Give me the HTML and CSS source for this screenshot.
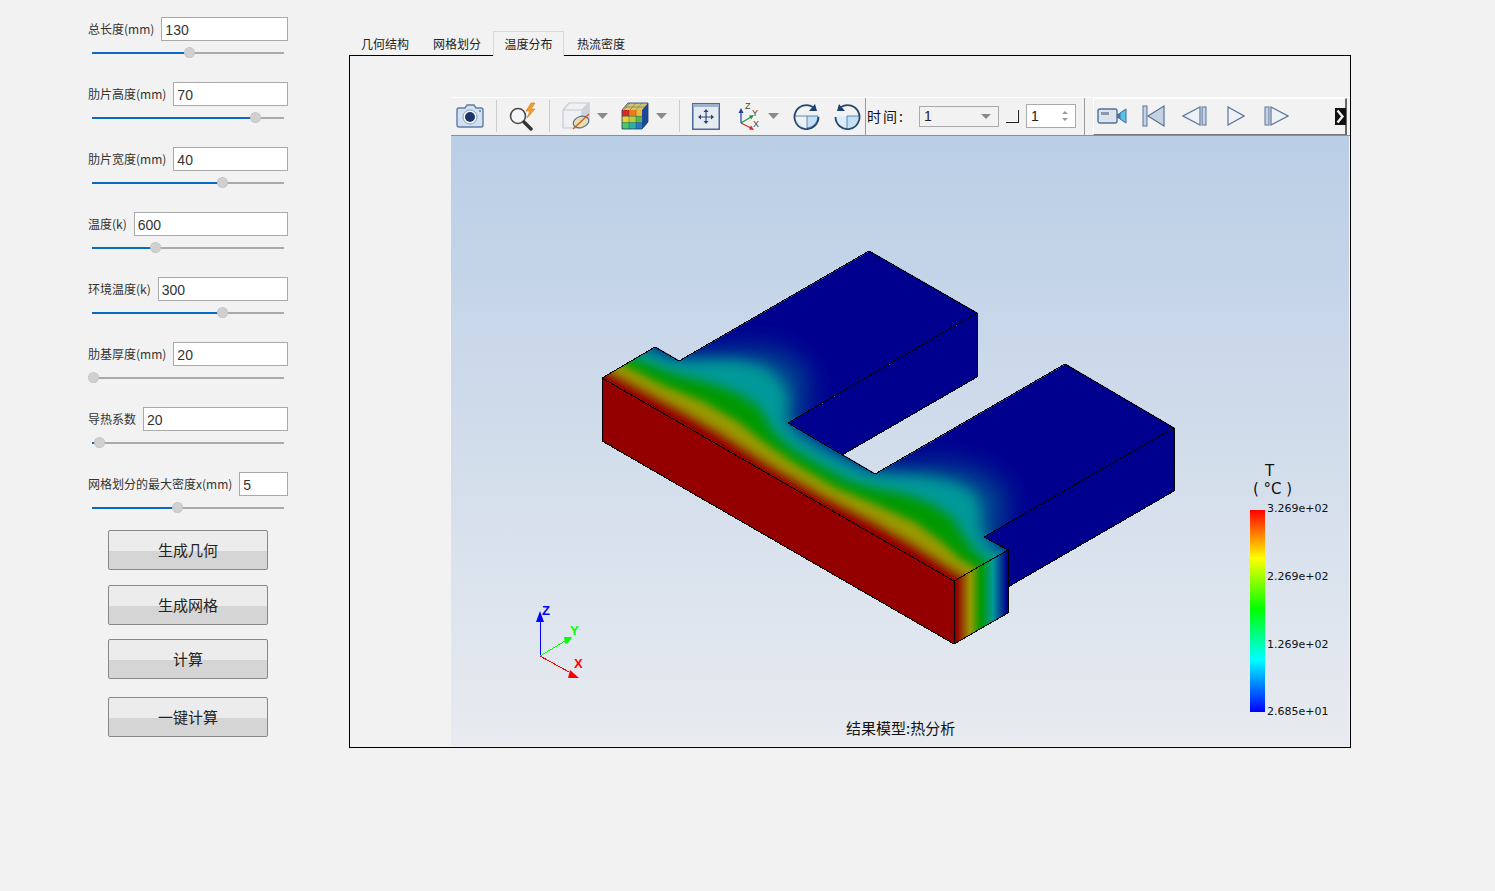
FILE: index.html
```html
<!DOCTYPE html>
<html lang="zh">
<head>
<meta charset="utf-8">
<title>热分析</title>
<link rel="stylesheet" href="styles.css">
</head>
<body>
<div class="app">
  <aside class="params">
    <div class="param"><div class="param-row"><label class="param-label">总长度(mm)</label><input class="field" value="130"></div><div class="slider"><div class="slider-fill" style="width:97px"></div><div class="slider-thumb" style="left:97px"></div></div></div>
    <div class="param"><div class="param-row"><label class="param-label">肋片高度(mm)</label><input class="field" value="70"></div><div class="slider"><div class="slider-fill" style="width:163px"></div><div class="slider-thumb" style="left:163px"></div></div></div>
    <div class="param"><div class="param-row"><label class="param-label">肋片宽度(mm)</label><input class="field" value="40"></div><div class="slider"><div class="slider-fill" style="width:130px"></div><div class="slider-thumb" style="left:130px"></div></div></div>
    <div class="param"><div class="param-row"><label class="param-label">温度(k)</label><input class="field" value="600"></div><div class="slider"><div class="slider-fill" style="width:63px"></div><div class="slider-thumb" style="left:63px"></div></div></div>
    <div class="param"><div class="param-row"><label class="param-label">环境温度(k)</label><input class="field" value="300"></div><div class="slider"><div class="slider-fill" style="width:130px"></div><div class="slider-thumb" style="left:130px"></div></div></div>
    <div class="param"><div class="param-row"><label class="param-label">肋基厚度(mm)</label><input class="field" value="20"></div><div class="slider"><div class="slider-fill" style="width:1px"></div><div class="slider-thumb" style="left:1px"></div></div></div>
    <div class="param"><div class="param-row"><label class="param-label">导热系数</label><input class="field" value="20"></div><div class="slider"><div class="slider-fill" style="width:7px"></div><div class="slider-thumb" style="left:7px"></div></div></div>
    <div class="param"><div class="param-row"><label class="param-label">网格划分的最大密度x(mm)</label><input class="field" value="5"></div><div class="slider"><div class="slider-fill" style="width:85px"></div><div class="slider-thumb" style="left:85px"></div></div></div>
    <div class="actions">
      <button class="action">生成几何</button>
      <button class="action action-b">生成网格</button>
      <button class="action action-c">计算</button>
      <button class="action action-d">一键计算</button>
    </div>
  </aside>

  <main class="workspace">
    <nav class="tabs">
      <span class="tab">几何结构</span>
      <span class="tab">网格划分</span>
      <span class="tab tab-active">温度分布</span>
      <span class="tab">热流密度</span>
    </nav>
    <section class="panel">
      <div class="viewer">
        <div class="toolbar">
          <svg class="i ml5" width="28" height="24" viewBox="0 0 28 24"><path d="M3 4h6l2-3h7l2 3h5a2 2 0 0 1 2 2v15a2 2 0 0 1-2 2H3a2 2 0 0 1-2-2V6a2 2 0 0 1 2-2z" fill="#d3e0ef" stroke="#5d7ca6" stroke-width="1.4"/><circle cx="14" cy="13" r="7" fill="#fff" stroke="#7f9cc0"/><circle cx="14" cy="13" r="5" fill="#1c3468"/><circle cx="24" cy="7" r="1" fill="#5d7ca6"/></svg>
          <span class="sep ml12"></span>
          <svg class="i ml11" width="31" height="29" viewBox="0 0 31 29"><path d="M23 1l-5 8h4l-3 7 8-9h-4l4-6z" fill="#f0a030" stroke="#d07810" stroke-width=".6"/><circle cx="10" cy="14" r="7.5" fill="#f4f7fa" stroke="#4a4a4a" stroke-width="1.6"/><path d="M16 20l7 7" stroke="#333" stroke-width="3.4" stroke-linecap="round"/></svg>
          <span class="sep ml10"></span>
          <svg class="i ml12" width="29" height="28" viewBox="0 0 29 28"><path d="M1 8l6-7h20v17l-7 8H1z" fill="#eef0f3" stroke="#c3c9d3" stroke-width="1.2"/><path d="M1 8h19v18M20 8l7-7" fill="none" stroke="#c3c9d3" stroke-width="1.2"/><path d="M20 8l7-7v17l-7 8z" fill="#cfd4dc"/><ellipse cx="19" cy="20" rx="8" ry="5.5" transform="rotate(-18 19 20)" fill="#eadfa8" stroke="#5b6f92" stroke-width="1.2"/><path d="M11 27l16-15" stroke="#d0562a" stroke-width="1.2"/></svg>
          <svg class="i ml6" width="11" height="6" viewBox="0 0 11 6"><path d="M0 0h11L5.500 6z" fill="#8a8a8a"/></svg>
          <svg class="i ml13" width="28" height="28" viewBox="0 0 28 28"><path d="M1 8l6-7h20l-6 7z" fill="#d8c66a"/><path d="M21 8l6-7v19l-6 7z" fill="#1c4aa0"/><rect x="1" y="8" width="20" height="19" fill="#48b050"/><rect x="1" y="8" width="7" height="6.300" fill="#d82a20"/><rect x="8" y="8" width="7" height="6.300" fill="#ee7a20"/><rect x="15" y="8" width="6" height="6.300" fill="#f0b830"/><rect x="1" y="14.300" width="7" height="6.300" fill="#e8d030"/><rect x="8" y="14.300" width="7" height="6.300" fill="#b8d038"/><rect x="15" y="14.300" width="6" height="6.300" fill="#58b848"/><rect x="1" y="20.600" width="7" height="6.400" fill="#48c868"/><rect x="8" y="20.600" width="7" height="6.400" fill="#30b0a0"/><rect x="15" y="20.600" width="6" height="6.400" fill="#2878c0"/><path d="M8 8v19M15 8v19M1 14.300h20M1 20.600h20M3 8l6-7M9 8l6-7M15 8l6-7M4 5h20M23 6v19M25 4v19" stroke="#1d3a6c" stroke-width=".6" fill="none" opacity=".6"/><path d="M1 8l6-7h20v19l-6 7H1z" fill="none" stroke="#1d3a6c" stroke-width=".8"/></svg>
          <svg class="i ml7" width="11" height="6" viewBox="0 0 11 6"><path d="M0 0h11L5.500 6z" fill="#8a8a8a"/></svg>
          <span class="sep ml12"></span>
          <svg class="i ml12" width="28" height="27" viewBox="0 0 28 27"><rect x=".75" y=".75" width="26.500" height="25.500" fill="#e6ebf2" stroke="#4d6a96" stroke-width="1.500"/><rect x="1" y="1" width="26" height="3" fill="#9fb3cf"/><path d="M14 7v13M8 14h12" stroke="#2a4675" stroke-width="1.200"/><path d="M14 6l-2.500 3h5zM14 21l-2.500-3h5zM6 14l3-2.500v5zM22 14l-3-2.500v5z" fill="#2a4675"/></svg>
          <svg class="i ml17" width="24" height="29" viewBox="0 0 24 29"><path d="M4 21V9" stroke="#1d3fa8" stroke-width="1.200"/><path d="M4 6l-2.500 5h5z" fill="#1d3fa8"/><path d="M4 21l10-6" stroke="#1f9a40" stroke-width="1.200"/><path d="M17 13l-5 .5 2.200 4z" fill="#1f9a40"/><path d="M4 21l10 5" stroke="#d02a2a" stroke-width="1.200"/><path d="M17 28l-5-.5 2-4z" fill="#d02a2a"/><text class="i-axis" x="8" y="7">Z</text><text class="i-axis" x="15" y="14">Y</text><text class="i-axis" x="16" y="25">X</text></svg>
          <svg class="i ml7" width="11" height="6" viewBox="0 0 11 6"><path d="M0 0h11L5.500 6z" fill="#8a8a8a"/></svg>
          <svg class="i ml14" width="27" height="27" viewBox="0 0 27 27"><path d="M14 13h11a12 12 0 0 1-11 12z" fill="#c4e0f5"/><path d="M2 14a12 12 0 0 0 12 12h0z" fill="#dcecf8"/><path d="M14 13h11a12 12 0 0 1-11 12zM2 13h12" fill="none" stroke="#3d6ea8" stroke-width=".8"/><path d="M20 4A12 12 0 1 0 25.500 14" fill="none" stroke="#27476f" stroke-width="1.800"/><path d="M24 8l-8 0 6-7z" fill="#1f3f6e"/></svg>
          <svg class="i ml14" width="27" height="27" viewBox="0 0 27 27"><path d="M13 13H2a12 12 0 0 0 11 12z" fill="#dcecf8"/><path d="M13 13h12a12 12 0 0 1-12 12z" fill="#c4e0f5"/><path d="M13 13v12M13 13h12" fill="none" stroke="#3d6ea8" stroke-width=".8"/><path d="M7 4a12 12 0 1 1-5.500 10" fill="none" stroke="#27476f" stroke-width="1.800"/><path d="M3 8l8 0-6-7z" fill="#1f3f6e"/></svg>
          <span class="sep-full ml4"></span>
          <span class="time-label">时间:</span>
          <div class="combo"><span>1</span><svg width="10" height="5" viewBox="0 0 10 5"><path d="M0 0h10L5 5z" fill="#8a8a8a"/></svg></div>
          <span class="corner"></span>
          <div class="spin"><span>1</span><svg width="8" height="12" viewBox="0 0 8 12"><path d="M4 1l3 3H1zM4 11L1 8h6z" fill="#9a9a9a"/></svg></div>
          <span class="sep-full ml8"></span>
          <div class="player">
            <svg class="i" width="30" height="18" viewBox="0 0 30 18"><rect x="1" y="2" width="19" height="14" rx="2" fill="#dde3ec" stroke="#50709c" stroke-width="1.400"/><rect x="4" y="5" width="8" height="3" fill="#8d9aab"/><path d="M20 7l3-1v6l-3-1z" fill="#50709c"/><path d="M23 6l6-4v14l-6-4z" fill="#5cc0e8" stroke="#3a6ea0"/></svg>
            <svg class="i ml15" width="23" height="22" viewBox="0 0 23 22"><rect x="1" y="1" width="4" height="20" fill="#c4d2e4" stroke="#5b7498"/><path d="M22 1v20L6 11z" fill="#c4d2e4" stroke="#5b7498" stroke-width="1.200"/></svg>
            <svg class="i ml17" width="25" height="20" viewBox="0 0 25 20"><path d="M18 1v18L1 10z" fill="#eef2f7" stroke="#5b7498" stroke-width="1.200"/><rect x="20" y="1" width="4" height="18" fill="#c4d2e4" stroke="#5b7498"/></svg>
            <svg class="i ml20" width="18" height="20" viewBox="0 0 18 20"><path d="M1 1v18l16-9z" fill="#eef2f7" stroke="#5b7498" stroke-width="1.200"/></svg>
            <svg class="i ml19" width="25" height="20" viewBox="0 0 25 20"><rect x="1" y="1" width="4" height="18" fill="#c4d2e4" stroke="#5b7498"/><path d="M7 1v18l17-9z" fill="#eef2f7" stroke="#5b7498" stroke-width="1.200"/></svg>
            <svg class="i more" width="11" height="19" viewBox="0 0 11 19"><path d="M0 1h11v17H0z" fill="#111"/><path d="M2.500 3.500L7.500 9.500l-5 6" fill="none" stroke="#f2f2f2" stroke-width="2.400"/></svg>
          </div>
        </div>
        <svg class="scene" viewBox="451 136 898 610" preserveAspectRatio="none">
          <defs>
            <linearGradient id="sky" x1="0" y1="0" x2="0" y2="1"><stop offset="0" stop-color="#bacee6"/><stop offset="1" stop-color="#e8ebf0"/></linearGradient>
            <linearGradient id="endFace" gradientUnits="userSpaceOnUse" x1="954" y1="0" x2="1008" y2="0"><stop offset=".05" stop-color="#940000"/><stop offset=".3" stop-color="#999900"/><stop offset=".5" stop-color="#009900"/><stop offset=".72" stop-color="#009999"/><stop offset=".98" stop-color="#00008f"/></linearGradient>
            <linearGradient id="ramp" x1="0" y1="0" x2="0" y2="1"><stop offset="0" stop-color="#f00"/><stop offset=".24" stop-color="#ff0"/><stop offset=".49" stop-color="#0f0"/><stop offset=".74" stop-color="#0ff"/><stop offset="1" stop-color="#00f"/></linearGradient>
            <clipPath id="topClip"><polygon points="603,378 656,347 680,361 870,251 978,313 789,423 876,474 1066,364 1175,428 985,537 1008,550 954,581"/></clipPath>
            <filter id="softOuter" filterUnits="userSpaceOnUse" x="451" y="136" width="898" height="610"><feGaussianBlur stdDeviation="14"/></filter>
            <filter id="softWide" filterUnits="userSpaceOnUse" x="451" y="136" width="898" height="610"><feGaussianBlur stdDeviation="7"/></filter>
            <filter id="softMid" filterUnits="userSpaceOnUse" x="451" y="136" width="898" height="610"><feGaussianBlur stdDeviation="6"/></filter>
            <filter id="soft" filterUnits="userSpaceOnUse" x="451" y="136" width="898" height="610"><feGaussianBlur stdDeviation="4"/></filter>
          </defs>
          <rect x="451" y="136" width="898" height="610" fill="url(#sky)"/>

          <g class="faces">
            <polygon points="978,313 978,377 843,455 789,423" fill="#00008f"/>
            <polygon points="1175,428 1175,491 1008,587 1008,550 985,537" fill="#00008f"/>
            <polygon points="603,378 954,581 954,644 603,441" fill="#940000"/>
            <polygon points="954,581 1009,550 1009,613 954,644" fill="url(#endFace)"/>
          </g>

          <g clip-path="url(#topClip)">
            <rect x="590" y="240" width="600" height="350" fill="#00008f"/>
            <g filter="url(#softOuter)">
              <polygon transform="matrix(351 203 54 -31 603 378)" fill="#00508f" points="-.3,-1 -.3,1 .03,1 .08,1.3 .12,1.7 .18,2.05 .25,2.05 .31,1.8 .36,1.3 .42,1.05 .6,1.05 .65,1.4 .7,1.8 .77,2 .84,1.95 .9,1.6 .94,1.2 .98,1 1.3,1 1.3,-1"/>
            </g>
            <g filter="url(#softWide)">
              <polygon transform="matrix(351 203 54 -31 603 378)" fill="#009999" points="-.3,-1 -.3,.88 0,.88 .05,.95 .08,1.1 .11,1.32 .15,1.55 .2,1.68 .26,1.6 .31,1.42 .345,1.15 .375,.98 .42,.9 .5,.9 .6,.95 .63,1.05 .66,1.22 .7,1.42 .75,1.58 .81,1.6 .85,1.45 .89,1.2 .93,1 .97,.9 1.3,.88 1.3,-1"/>
            </g>
            <g filter="url(#softMid)">
              <polygon transform="matrix(351 203 54 -31 603 378)" fill="#009900" points="-.3,-1 -.3,.61 0,.61 .1,.74 .16,.9 .22,1 .28,1 .33,.87 .38,.7 .45,.62 .6,.62 .66,.76 .72,.95 .78,1.03 .84,1 .9,.82 .95,.68 1,.61 1.3,.61 1.3,-1"/>
            </g>
            <g filter="url(#soft)">
              <g transform="matrix(351 203 54 -31 603 378)">
                <polygon fill="#999900" points="-.3,-1 -.3,.4 0,.4 .1,.44 .2,.55 .3,.55 .4,.45 .5,.4 .6,.4 .7,.5 .8,.58 .88,.52 .95,.42 1,.4 1.3,.4 1.3,-1"/>
                <polygon fill="#940000" points="-.3,-1 -.3,.19 0,.19 .2,.24 .3,.24 .45,.19 .6,.19 .75,.24 .85,.24 1,.19 1.3,.19 1.3,-1"/>
              </g>
            </g>
          </g>

          <g class="edges">
            <polyline points="603,378 656,347 680,361 870,251 978,313 789,423 876,474 1066,364 1175,428 985,537 1009,550"/>
            <polyline points="603,378 603,441 955,644 1009,613 1009,550 955,581 603,378"/>
            <line x1="955" y1="581" x2="955" y2="644"/>
            <polyline points="978,313 978,377 843,455"/>
            <polyline points="1175,428 1175,491 1009,587"/>
          </g>

          <g class="triad">
            <line x1="541" y1="656" x2="541" y2="618" stroke="#00f"/>
            <polygon points="541,611 537,622 545,622" fill="#00f"/>
            <line x1="541" y1="656" x2="566" y2="641" stroke="#0f0"/>
            <polygon points="573,637 565,637 566,644 570,642" fill="#0f0"/>
            <line x1="541" y1="656" x2="570" y2="672" stroke="#f00"/>
            <polygon points="580,678 569,678 571,670" fill="#f00"/>
          </g>
          <text class="axis-z" x="542" y="615">Z</text>
          <text class="axis-y" x="570" y="635">Y</text>
          <text class="axis-x" x="574" y="668">X</text>

          <text class="legend-t" x="1265" y="476">T</text>
          <text class="legend-u" x="1253" y="494">( °C )</text>
          <rect x="1250" y="510" width="15" height="202" fill="url(#ramp)"/>
          <text class="legend-v" x="1267" y="512">3.269e+02</text>
          <text class="legend-v" x="1267" y="580">2.269e+02</text>
          <text class="legend-v" x="1267" y="648">1.269e+02</text>
          <text class="legend-v" x="1267" y="715">2.685e+01</text>
          <text class="caption" x="846" y="734">结果模型:热分析</text>
        </svg>
      </div>
    </section>
  </main>
</div>
</body>
</html>
```
FILE: styles.css
```css
* { box-sizing: border-box; }
html, body { margin: 0; padding: 0; }
body {
  background: #f2f2f2;
  color: #222;
  font-family: "Noto Sans CJK SC", "Liberation Sans", sans-serif;
  overflow: hidden;
}
.app { display: flex; width: 1495px; height: 891px; }

/* left parameter column */
.params {
  width: 349px;
  flex: none;
  padding: 17px 61px 0 87px;
  display: flex;
  flex-direction: column;
  gap: 17px;
}
.param { height: 48px; }
.param-row { display: flex; align-items: center; gap: 7px; height: 24px; }
.param-label { padding-left: 1px; font-size: 12px; line-height: 24px; white-space: nowrap; color: #333; }
.field {
  flex: 1;
  min-width: 0;
  height: 24px;
  border: 1px solid #aaa;
  background: #fff;
  padding: 2px 3px 0 3px;
  font: 14px "Liberation Sans", sans-serif;
  color: #333;
  border-radius: 0;
  outline: none;
}
.slider {
  position: relative;
  margin: 11px 4px 0 5px;
  height: 2px;
  background: #aaa;
}
.slider-fill { height: 2px; background: #0a6abf; }
.slider-thumb {
  position: absolute;
  top: -5px;
  width: 11px;
  height: 11px;
  margin-left: -5px;
  border-radius: 50%;
  background: #d0d0d0;
  border: 1px dotted #bbb;
}

.actions { display: flex; flex-direction: column; margin-top: -7px; padding-left: 21px; }
.action {
  width: 160px;
  height: 40px;
  padding: 0 0 2px;
  border: 1px solid #888;
  border-radius: 2px;
  background: linear-gradient(#ececec 0 52%, #d5d5d5 52% 100%);
  font: 15px "Noto Sans CJK SC", sans-serif;
  color: #222;
}
.action-b { margin-top: 15px; }
.action-c { margin-top: 14px; }
.action-d { margin-top: 18px; }

/* workspace */
.workspace { width: 1002px; flex: none; padding-top: 31px; display: flex; flex-direction: column; }
.tabs { display: flex; height: 24px; position: relative; z-index: 1; }
.tab {
  width: 72px;
  height: 25px;
  text-align: center;
  font-size: 12px;
  line-height: 26px;
  color: #222;
}
.tab-active { width: 71px; margin-right: 1px; border: 1px solid #d9d9d9; border-bottom: 0; background: #f2f2f2; line-height: 24px; }
.panel {
  width: 1002px;
  height: 693px;
  border: 1px solid #000;
  padding: 41px 0 0 101px;
}
.viewer { width: 899px; height: 650px; display: flex; flex-direction: column; }

/* toolbar */
.toolbar {
  height: 39px;
  flex: none;
  display: flex;
  align-items: center;
  padding-bottom: 1px;
  background: #f2f2f2;
  border-top: 1px solid #fff;
  border-bottom: 1px solid #8f8f8f;
  font-size: 13px;
}
.i { flex: none; display: block; }
.i-axis { font: 9px "Liberation Sans", sans-serif; fill: #444; }
.sep { width: 1px; height: 32px; background: #ccc; flex: none; }
.sep-full { width: 1px; height: 37px; background: #999; flex: none; align-self: flex-start; }
.ml4 { margin-left: 4px; }
.ml5 { margin-left: 5px; }
.ml6 { margin-left: 6px; }
.ml7 { margin-left: 7px; }
.ml8 { margin-left: 8px; }
.ml10 { margin-left: 10px; }
.ml11 { margin-left: 11px; }
.ml12 { margin-left: 12px; }
.ml13 { margin-left: 13px; }
.ml14 { margin-left: 14px; }
.ml15 { margin-left: 15px; }
.ml17 { margin-left: 17px; }
.ml19 { margin-left: 19px; }
.ml20 { margin-left: 20px; }
.time-label { margin-left: 1px; width: 52px; font-size: 14px; letter-spacing: 2px; color: #111; white-space: nowrap; flex: none; }
.combo {
  width: 80px;
  height: 21px;
  flex: none;
  border: 1px solid #aaa;
  display: flex;
  align-items: center;
  justify-content: space-between;
  padding: 0 7px 0 4px;
  font: 14px "Liberation Sans", sans-serif;
}
.corner {
  width: 13px;
  height: 13px;
  flex: none;
  margin-left: 7px;
  border-right: 1.500px solid #222;
  border-bottom: 1.500px solid #222;
  box-shadow: inset -1px -1px 0 #fff;
}
.spin {
  width: 50px;
  height: 24px;
  flex: none;
  margin-left: 7px;
  background: #fff;
  border: 1px solid #aaa;
  display: flex;
  align-items: center;
  justify-content: space-between;
  padding: 0 6px 0 4px;
  font: 14px "Liberation Sans", sans-serif;
}
.player {
  flex: none;
  position: relative;
  align-self: flex-start;
  width: 254px;
  height: 37px;
  margin-left: 8px;
  padding: 0 0 1px 3px;
  display: flex;
  align-items: center;
  background: #f2f2f2;
  border-top: 1px solid #fff;
  border-left: 1px solid #fff;
  border-right: 2px solid #666;
  border-bottom: 1px solid #777;
}
.more { position: absolute; right: -1px; top: 8px; }

/* scene */
.scene { display: block; width: 898px; height: 610px; }
.faces polygon { shape-rendering: crispEdges; }
.edges { transform: translateX(-1px); }
.edges polyline, .edges line { fill: none; stroke: #000; stroke-width: 1; shape-rendering: crispEdges; }
.triad { transform: translateX(-1px); }
.triad line { stroke-width: 1; shape-rendering: crispEdges; }
.axis-z, .axis-y, .axis-x { font: bold 13px "Liberation Sans", sans-serif; }
.axis-z { fill: #00f; }
.axis-y { fill: #0f0; }
.axis-x { fill: #f00; }
.legend-t { font: 15px "DejaVu Sans", sans-serif; fill: #111; }
.legend-u { font: 15px "DejaVu Sans", sans-serif; fill: #111; }
.legend-v { font: 11px "DejaVu Sans", sans-serif; fill: #111; }
.caption { font: 15px "Noto Sans CJK SC", sans-serif; fill: #111; }
```
